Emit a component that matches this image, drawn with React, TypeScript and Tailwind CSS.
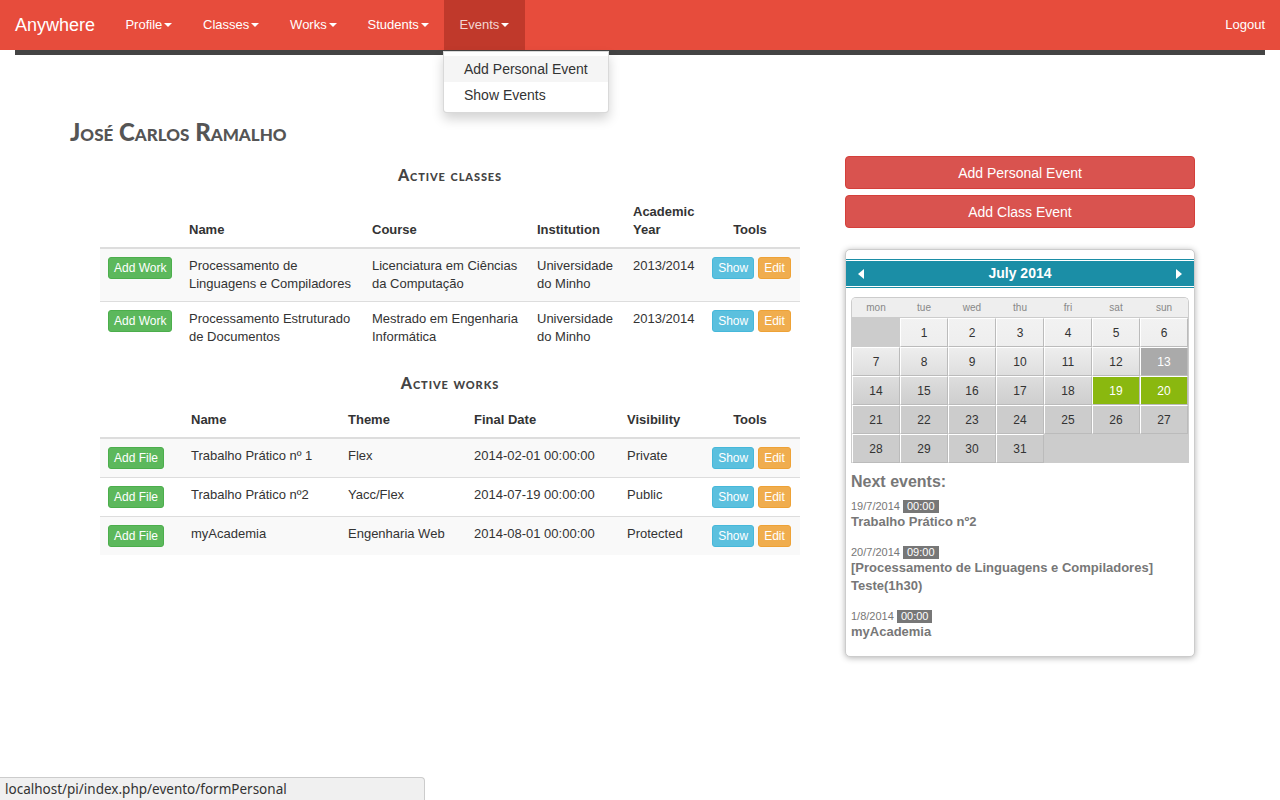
import React from "react";

const navItems = ["Profile", "Classes", "Works", "Students", "Events"];

const classes = [
  {
    name: "Processamento de Linguagens e Compiladores",
    course: "Licenciatura em Ciências da Computação",
    inst: "Universidade do Minho",
    year: "2013/2014",
  },
  {
    name: "Processamento Estruturado de Documentos",
    course: "Mestrado em Engenharia Informática",
    inst: "Universidade do Minho",
    year: "2013/2014",
  },
];

const works = [
  { name: "Trabalho Prático nº 1", theme: "Flex", date: "2014-02-01 00:00:00", vis: "Private" },
  { name: "Trabalho Prático nº2", theme: "Yacc/Flex", date: "2014-07-19 00:00:00", vis: "Public" },
  { name: "myAcademia", theme: "Engenharia Web", date: "2014-08-01 00:00:00", vis: "Protected" },
];

const events = [
  { date: "19/7/2014", time: "00:00", title: "Trabalho Prático nº2" },
  { date: "20/7/2014", time: "09:00", title: "[Processamento de Linguagens e Compiladores] Teste(1h30)" },
  { date: "1/8/2014", time: "00:00", title: "myAcademia" },
];

const Caret = () => (
  <span className="ml-[2px] inline-block h-0 w-0 border-x-[4px] border-t-[4px] border-x-transparent border-t-white align-middle" />
);

const XsButton = ({ label, color }: { label: string; color: string }) => (
  <span className={`inline-block rounded-[3px] border px-[5px] py-px align-top text-[12px] leading-[18px] text-white ${color}`}>
    {label}
  </span>
);

const Tools = () => (
  <div className="flex justify-center gap-[4px] pl-[3px]">
    <XsButton label="Show" color="border-[#46b8da] bg-[#5bc0de]" />
    <XsButton label="Edit" color="border-[#eea236] bg-[#f0ad4e]" />
  </div>
);

const SectionTitle = ({ children, className }: { children: React.ReactNode; className: string }) => (
  <h2
    className={`text-center font-['Lato',sans-serif] text-[16px] font-black leading-[20px] tracking-[0.9px] text-[#444] [font-variant-caps:small-caps] ${className}`}
  >
    {children}
  </h2>
);

const thCls = "border-b-2 border-[#ddd] px-[8px] py-[8px] text-left align-bottom font-bold";

const ClassesTable = () => (
  <table className="mx-[30px] w-[700px] table-fixed border-separate border-spacing-0 text-[13px] leading-[18px] text-[#333]">
    <thead>
      <tr>
        <th className={`${thCls} w-[81px]`}></th>
        <th className={`${thCls} w-[183px]`}>Name</th>
        <th className={`${thCls} w-[165px]`}>Course</th>
        <th className={`${thCls} w-[96px]`}>Institution</th>
        <th className={`${thCls} w-[75px]`}>Academic Year</th>
        <th className={`${thCls} w-[100px] !text-center`}>Tools</th>
      </tr>
    </thead>
    <tbody>
      {classes.map((c, i) => {
        const td = `px-[8px] py-[8px] align-top ${i > 0 ? "border-t border-[#ddd]" : ""} ${i % 2 === 0 ? "bg-[#f9f9f9]" : ""}`;
        return (
          <tr key={c.name}>
            <td className={td}>
              <XsButton label="Add Work" color="border-[#4cae4c] bg-[#5cb85c]" />
            </td>
            <td className={td}>{c.name}</td>
            <td className={td}>{c.course}</td>
            <td className={td}>{c.inst}</td>
            <td className={td}>{c.year}</td>
            <td className={td}>
              <Tools />
            </td>
          </tr>
        );
      })}
    </tbody>
  </table>
);

const WorksTable = () => (
  <table className="mx-[30px] w-[700px] table-fixed border-separate border-spacing-0 text-[13px] leading-[18px] text-[#333]">
    <thead>
      <tr>
        <th className={`${thCls} w-[83px]`}></th>
        <th className={`${thCls} w-[157px]`}>Name</th>
        <th className={`${thCls} w-[126px]`}>Theme</th>
        <th className={`${thCls} w-[153px]`}>Final Date</th>
        <th className={`${thCls} w-[81px]`}>Visibility</th>
        <th className={`${thCls} w-[100px] !text-center`}>Tools</th>
      </tr>
    </thead>
    <tbody>
      {works.map((w, i) => {
        const td = `px-[8px] py-[8px] align-top ${i > 0 ? "border-t border-[#ddd]" : ""} ${i % 2 === 0 ? "bg-[#f9f9f9]" : ""}`;
        return (
          <tr key={w.name}>
            <td className={td}>
              <XsButton label="Add File" color="border-[#4cae4c] bg-[#5cb85c]" />
            </td>
            <td className={td}>{w.name}</td>
            <td className={td}>{w.theme}</td>
            <td className={td}>{w.date}</td>
            <td className={td}>{w.vis}</td>
            <td className={td}>
              <Tools />
            </td>
          </tr>
        );
      })}
    </tbody>
  </table>
);

const dayCell = "flex h-[29px] items-center justify-center border border-t-white border-l-white border-r-[#bbb] border-b-[#bbb]";

const Calendar = () => {
  const days = Array.from({ length: 31 }, (_, i) => i + 1);
  return (
    <div className="mt-[21px] rounded-[5px] border border-[#ccc] bg-white pt-[9px] pb-[15px] shadow-[0_1px_6px_rgba(0,0,0,0.3)]">
      <div className="border-y border-[#1b8ea6] py-px">
        <div className="flex h-[25px] items-center justify-between bg-[#1b8ea6] px-[12px] text-white">
          <span className="inline-block h-0 w-0 border-y-[5px] border-r-[6px] border-y-transparent border-r-white" />
          <span className="text-[14px] font-bold">July 2014</span>
          <span className="inline-block h-0 w-0 border-y-[5px] border-l-[6px] border-y-transparent border-l-white" />
        </div>
      </div>
      <div className="mx-[5px] mt-[9px] overflow-hidden rounded-t-[5px] border-x border-t border-[#ccc]">
        <div className="grid h-[20px] grid-cols-7 border-b border-[#ccc] bg-[#eee] text-[10px] leading-[20px] text-[#888]">
          {["mon", "tue", "wed", "thu", "fri", "sat", "sun"].map((d) => (
            <div key={d} className="text-center">
              {d}
            </div>
          ))}
        </div>
        <div className="grid grid-cols-7 bg-[linear-gradient(to_bottom,#f2f2f2_0%,#eeeeee_20%,#cccccc_62%,#cccccc_100%)] text-[12px] text-[#333]">
          <div className="h-[29px] bg-[#ccc]" />
          {days.map((d) => {
            let extra = "";
            if (d === 13) extra = "bg-[#aaa] text-white";
            if (d === 19 || d === 20) extra = "bg-[#8ab80f] text-white";
            return (
              <div key={d} className={`${dayCell} ${extra}`}>
                {d}
              </div>
            );
          })}
          <div className="col-span-3 h-[29px] bg-[#ccc]" />
        </div>
      </div>
      <div className="px-[5px] text-[#777]">
        <div className="mt-[9px] text-[16px] font-bold leading-[20px]">Next events:</div>
        {events.map((e, i) => (
          <div key={e.date} className={i === 0 ? "mt-[7px]" : "mt-[14px]"}>
            <div className="text-[11px] leading-[14px]">
              {e.date}{" "}
              <span className="inline-block bg-[#777] px-[4px] leading-[13px] text-white">{e.time}</span>
            </div>
            <div className="text-[13px] font-bold leading-[18px]">{e.title}</div>
          </div>
        ))}
      </div>
    </div>
  );
};

export default function App() {
  return (
    <div className="relative min-h-[800px] bg-white font-['Liberation_Sans',Arial,sans-serif] text-[#333]">
      <nav className="flex h-[50px] items-stretch bg-[#e74c3c] pl-[15px] text-[13px] text-white">
        <span className="flex items-center pr-[15px] text-[18px]">Anywhere</span>
        {navItems.map((n) => (
          <span
            key={n}
            className={`flex items-center px-[15.4px] ${n === "Events" ? "bg-[#c0392b] text-[#f3d6d2]" : ""}`}
          >
            {n}
            <Caret />
          </span>
        ))}
        <span className="ml-auto flex items-center px-[15px]">Logout</span>
      </nav>
      <div className="mx-[15px] h-[5px] bg-[#444]" />

      <div className="px-[70px]">
        <h1 className="mt-[64px] font-['Lato',sans-serif] text-[24px] font-black leading-[26px] text-[#555] [font-variant-caps:small-caps]">
          José Carlos Ramalho
        </h1>
        <div className="mt-[11px] flex">
          <div className="w-[760px]">
            <SectionTitle className="mt-[9px] mb-[10px]">Active classes</SectionTitle>
            <ClassesTable />
            <SectionTitle className="mt-[19px] mb-[10px]">Active works</SectionTitle>
            <WorksTable />
          </div>
          <div className="ml-[15px] w-[350px]">
            <button className="flex h-[33px] w-full items-center justify-center rounded-[4px] border border-[#d43f3a] bg-[#d9534f] pt-px text-[14px] text-white">
              Add Personal Event
            </button>
            <button className="mt-[6px] flex h-[33px] w-full items-center justify-center rounded-[4px] border border-[#d43f3a] bg-[#d9534f] pt-px text-[14px] text-white">
              Add Class Event
            </button>
            <Calendar />
          </div>
        </div>
      </div>

      <div className="absolute left-[443px] top-[51px] w-[166px] rounded-b-[4px] border border-[rgba(0,0,0,0.15)] bg-white py-[4px] text-[14px] leading-[20px] text-[#333] shadow-[0_6px_12px_rgba(0,0,0,0.175)]">
        <div className="bg-[#f5f5f5] px-[20px] py-[3px]">Add Personal Event</div>
        <div className="px-[20px] py-[3px]">Show Events</div>
      </div>

      <div className="fixed bottom-0 left-0 h-[23px] w-[425px] rounded-tr-[4px] border-t border-r border-[#ccc] bg-[#f0f0f0] pl-[5px] font-['Noto_Sans',sans-serif] text-[13.5px] leading-[22px] text-[#333]">
        localhost/pi/index.php/evento/formPersonal
      </div>
    </div>
  );
}
